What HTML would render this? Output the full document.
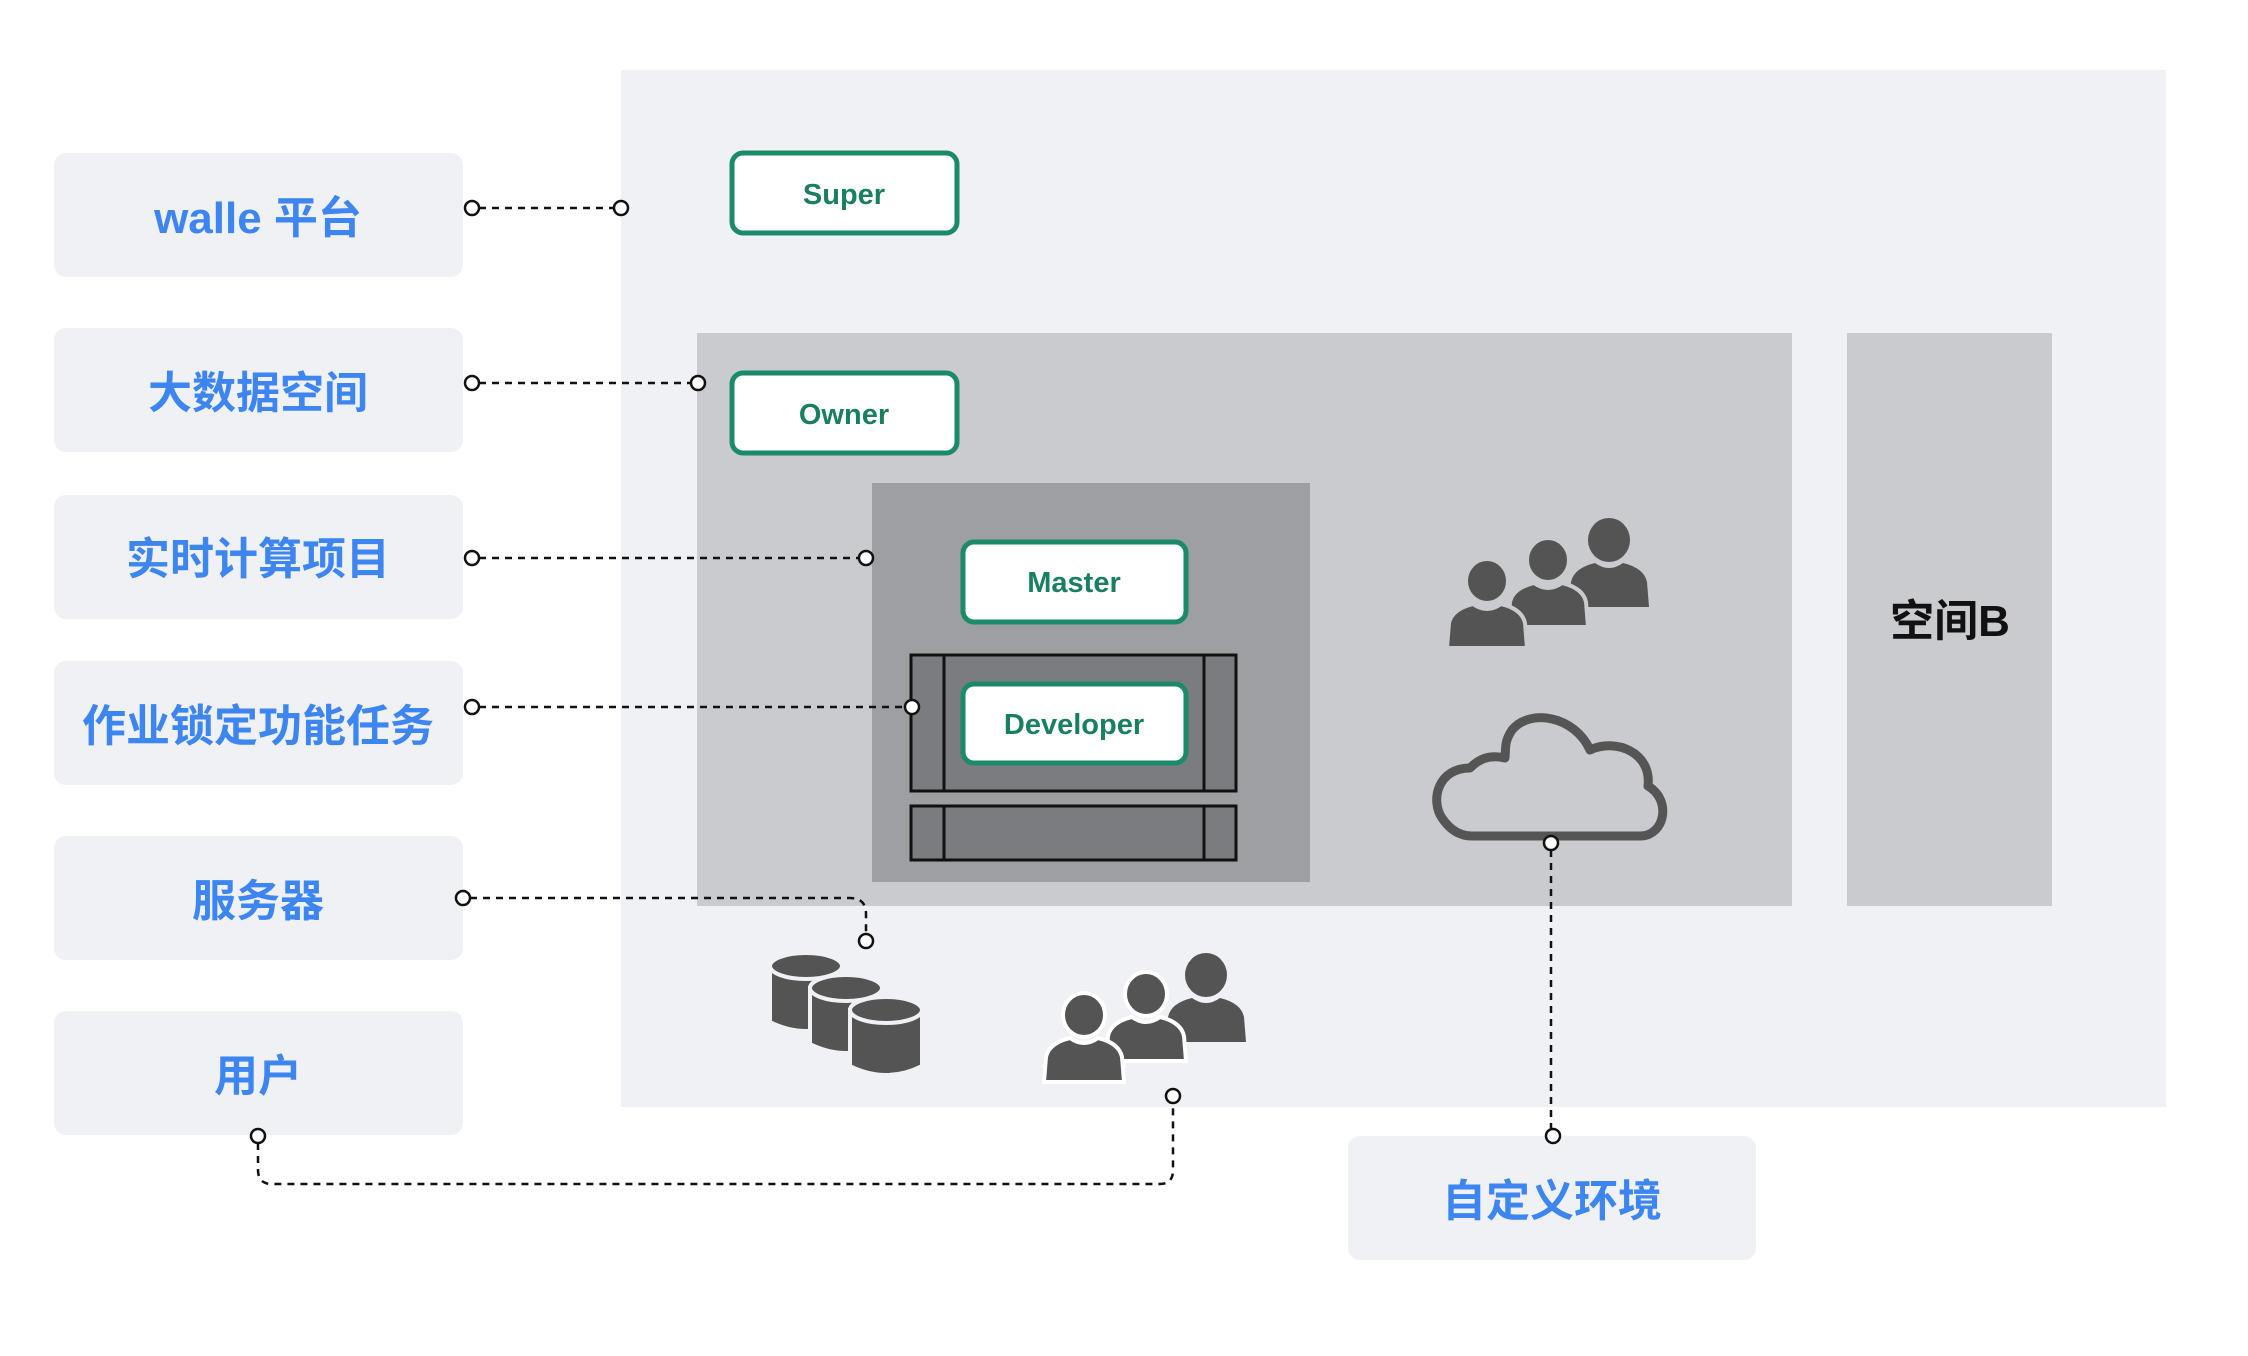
<!DOCTYPE html>
<html><head><meta charset="utf-8"><style>
html,body{margin:0;padding:0;background:#fff;}
svg{display:block;}
text{font-family:"Liberation Sans","Noto Sans CJK SC",sans-serif;font-weight:bold;}
</style></head><body>
<svg width="2248" height="1356" viewBox="0 0 2248 1356" xmlns="http://www.w3.org/2000/svg">
<defs>
<g id="person">
<path d="M-40,67 L-38,42 Q-35,28 -14,23 Q0,33 14,23 Q35,28 38,42 L40,67 Z" fill="#545454"/>
<ellipse cx="0" cy="0" rx="21" ry="22" fill="#545454"/>
</g>
<g id="personw">
<path d="M-40,67 L-38,42 Q-35,28 -14,23 Q0,33 14,23 Q35,28 38,42 L40,67 Z" fill="#545454" stroke="#fff" stroke-width="4"/>
<ellipse cx="0" cy="0" rx="21" ry="22" fill="#545454" stroke="#fff" stroke-width="4"/>
</g>
<g id="personc">
<path d="M-40,67 L-38,42 Q-35,28 -14,23 Q0,33 14,23 Q35,28 38,42 L40,67 Z" fill="#545454" stroke="#cacbcf" stroke-width="4"/>
<ellipse cx="0" cy="0" rx="21" ry="22" fill="#545454" stroke="#cacbcf" stroke-width="4"/>
</g>
</defs>
<rect x="621" y="70" width="1545" height="1037" fill="#f0f1f5"/>
<g fill="#f0f1f5">
<rect x="54" y="153" width="409" height="124" rx="12"/>
<rect x="54" y="328" width="409" height="124" rx="12"/>
<rect x="54" y="495" width="409" height="124" rx="12"/>
<rect x="54" y="661" width="409" height="124" rx="12"/>
<rect x="54" y="836" width="409" height="124" rx="12"/>
<rect x="54" y="1011" width="409" height="124" rx="12"/>
<rect x="1348" y="1136" width="408" height="124" rx="12"/>
</g>
<g fill="#3d85f0" font-size="44" text-anchor="middle">
<text x="258" y="233">walle 平台</text>
<text x="258" y="408">大数据空间</text>
<text x="258" y="574">实时计算项目</text>
<text x="258" y="741">作业锁定功能任务</text>
<text x="258" y="916">服务器</text>
<text x="258" y="1091">用户</text>
<text x="1552" y="1216">自定义环境</text>
</g>
<rect x="697" y="333" width="1095" height="573" fill="#cacbcf"/>
<rect x="1847" y="333" width="205" height="573" fill="#cacbcf"/>
<text x="1950" y="636" font-size="44" text-anchor="middle" fill="#111">空间B</text>
<rect x="872" y="483" width="438" height="399" fill="#9e9fa3"/>
<g fill="#7b7c80" stroke="#111" stroke-width="3">
<rect x="911" y="655" width="325" height="136"/>
<rect x="911" y="806" width="325" height="54"/>
<line x1="944" y1="655" x2="944" y2="791"/><line x1="1204" y1="655" x2="1204" y2="791"/>
<line x1="944" y1="806" x2="944" y2="860"/><line x1="1204" y1="806" x2="1204" y2="860"/>
</g>
<g fill="#fff" stroke="#1a8a6a" stroke-width="5">
<rect x="732" y="153" width="225" height="80" rx="11"/>
<rect x="732" y="373" width="225" height="80" rx="11"/>
<rect x="963" y="542" width="223" height="80" rx="11"/>
<rect x="963" y="684" width="223" height="79" rx="11"/>
</g>
<g fill="#1a7f5f" font-size="29" text-anchor="middle">
<text x="844" y="204">Super</text>
<text x="844" y="424">Owner</text>
<text x="1074" y="592">Master</text>
<text x="1074" y="734">Developer</text>
</g>
<use href="#person" x="1609" y="540"/>
<use href="#personc" x="1548" y="560"/>
<use href="#personc" x="1487" y="581"/>
<path d="M1472,836 L1640,836 C1665,836 1672,800 1648,786 C1652,752 1615,738 1590,750 C1575,716 1530,708 1512,730 C1504,742 1506,748 1505,758 C1488,754 1478,760 1470,768 C1438,768 1430,800 1442,818 C1450,830 1460,836 1472,836 Z" fill="none" stroke="#555" stroke-width="9" stroke-linejoin="round"/>
<g fill="#545454" stroke="#f0f1f5" stroke-width="4">
<path d="M770,966 L770,1022 Q806,1040 842,1022 L842,966 Z"/>
<ellipse cx="806" cy="966" rx="36" ry="13"/>
<path d="M810,988 L810,1044 Q846,1062 882,1044 L882,988 Z"/>
<ellipse cx="846" cy="988" rx="36" ry="13"/>
<path d="M850,1010 L850,1066 Q886,1084 922,1066 L922,1010 Z"/>
<ellipse cx="886" cy="1010" rx="36" ry="13"/>
</g>
<use href="#person" x="1206" y="975"/>
<use href="#personw" x="1146" y="994"/>
<use href="#personw" x="1084" y="1015"/>
<g fill="none" stroke="#111" stroke-width="2.5" stroke-dasharray="7,6">
<path d="M479,208 H614"/>
<path d="M479,383 H691"/>
<path d="M479,558 H859"/>
<path d="M479,707 H905"/>
<path d="M470,898 H850 Q866,898 866,914 V934"/>
<path d="M258,1143 V1170 Q258,1184 272,1184 H1160 Q1173,1184 1173,1170 V1103"/>
<path d="M1551,850 V1129"/>
</g>
<g fill="#fff" stroke="#111" stroke-width="2.5">
<circle cx="472" cy="208" r="7"/><circle cx="621" cy="208" r="7"/>
<circle cx="472" cy="383" r="7"/><circle cx="698" cy="383" r="7"/>
<circle cx="472" cy="558" r="7"/><circle cx="866" cy="558" r="7"/>
<circle cx="472" cy="707" r="7"/><circle cx="912" cy="707" r="7"/>
<circle cx="463" cy="898" r="7"/><circle cx="866" cy="941" r="7"/>
<circle cx="258" cy="1136" r="7"/><circle cx="1173" cy="1096" r="7"/>
<circle cx="1551" cy="843" r="7"/><circle cx="1553" cy="1136" r="7"/>
</g>
</svg>
</body></html>
